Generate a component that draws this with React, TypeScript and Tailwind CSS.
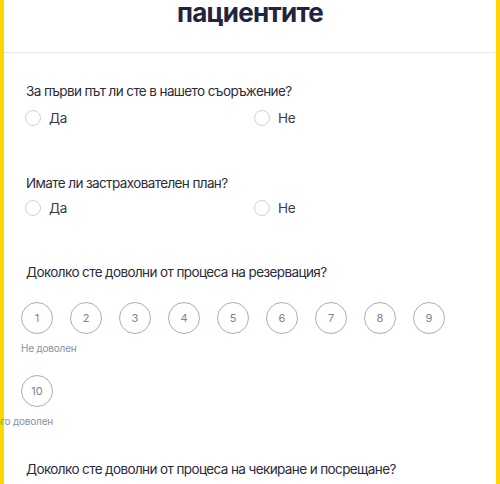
import React from 'react';

const scale = [1, 2, 3, 4, 5, 6, 7, 8, 9, 10];

const YesNo: React.FC = () => (
  <div className="grid grid-cols-2 text-[13.5px] tracking-[-0.02em] text-[#3a3a4e]">
    {['Да', 'Не'].map((opt) => (
      <label key={opt} className="flex items-center gap-[8px] pl-[4px] h-5">
        <span className="w-4 h-4 rounded-full border border-[#cfd1da] bg-white" />
        <span>{opt}</span>
      </label>
    ))}
  </div>
);

const Question: React.FC<{ mt: string; children: React.ReactNode }> = ({ mt, children }) => (
  <p className={`${mt} pl-[5px] text-[13.5px] leading-5 tracking-[-0.045em] text-[#2b2b3d]`}>{children}</p>
);

export default function App() {
  return (
    <div className="min-h-screen bg-white border-x-4 border-[#ffd600] font-['Inter',sans-serif]">
      {/* title, scrolled so only its last line shows */}
      <div className="h-[53px] border-b border-[#e4e5ec] flex justify-center overflow-hidden">
        <h1 className="-mt-[1px] text-[26px] leading-[28px] font-bold tracking-[-0.03em] text-[#23233f]">
          пациентите
        </h1>
      </div>

      <div className="px-[17px]">
        <Question mt="mt-[28px]">За първи път ли сте в нашето съоръжение?</Question>
        <div className="mt-[7px]">
          <YesNo />
        </div>

        <Question mt="mt-[45px]">Имате ли застрахователен план?</Question>
        <div className="mt-[5px]">
          <YesNo />
        </div>

        <Question mt="mt-[44px]">Доколко сте доволни от процеса на резервация?</Question>
        <div className="mt-[20px] flex flex-wrap gap-x-[17px] gap-y-[19px]">
          {scale.map((n) => (
            <div key={n} className="w-8 flex flex-col">
              <div className="w-8 h-8 rounded-full border border-[#a9adc0] flex items-center justify-center text-[11px] text-[#7d8197]">
                {n}
              </div>
              <div
                className={`mt-[6px] h-4 w-8 flex whitespace-nowrap text-[10px] leading-4 tracking-[-0.02em] text-[#8b8fa3] ${
                  n === 10 ? 'justify-end' : 'justify-start'
                }`}
              >
                {n === 1 ? 'Не доволен' : n === 10 ? 'Много доволен' : ''}
              </div>
            </div>
          ))}
        </div>

        <Question mt="mt-[30px]">Доколко сте доволни от процеса на чекиране и посрещане?</Question>
        <div className="h-20" />
      </div>
    </div>
  );
}
